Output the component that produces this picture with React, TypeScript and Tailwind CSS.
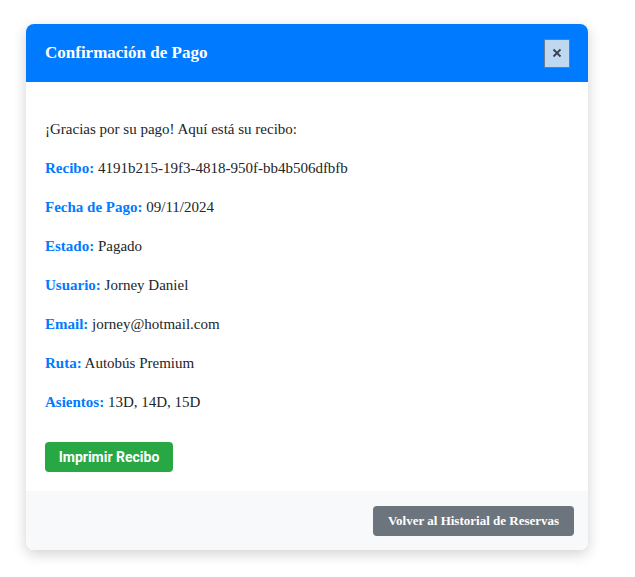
import React from 'react';

const fields = [
  { label: 'Recibo:', value: '4191b215-19f3-4818-950f-bb4b506dfbfb' },
  { label: 'Fecha de Pago:', value: '09/11/2024' },
  { label: 'Estado:', value: 'Pagado' },
  { label: 'Usuario:', value: 'Jorney Daniel' },
  { label: 'Email:', value: 'jorney@hotmail.com' },
  { label: 'Ruta:', value: 'Autobús Premium' },
  { label: 'Asientos:', value: '13D, 14D, 15D' },
];

const App = () => {
  return (
    <div className="min-h-[577px] bg-white pt-6 pl-[26px] font-['Liberation_Serif',serif]">
      <div className="w-[562px] rounded-lg bg-white shadow-[0_4px_14px_rgba(0,0,0,0.18)] overflow-hidden">
        <div className="flex h-[58px] items-center justify-between bg-[#007bff] pl-[19px] pr-[18px]">
          <h2 className="text-[17px] font-bold text-white">Confirmación de Pago</h2>
          <button className="flex h-[29px] w-[26px] items-center justify-center border border-[#6b7c90] bg-[#bfd8f2] text-[#343a40]">
            <svg width="10" height="10" viewBox="0 0 10 10">
              <path d="M1.5 1.5 L8.5 8.5 M8.5 1.5 L1.5 8.5" stroke="#3a4150" strokeWidth="1.8" />
            </svg>
          </button>
        </div>
        <div className="px-[19px] pt-[36px] pb-[19px] text-[15px] leading-[23px] text-[#212529]">
          <p className="mb-4">¡Gracias por su pago! Aquí está su recibo:</p>
          {fields.map((f) => (
            <p key={f.label} className="mb-4">
              <span className="font-bold text-[#007bff]">{f.label}</span> {f.value}
            </p>
          ))}
          <button className="mt-[12px] h-[30px] w-[128px] rounded bg-[#28a745] font-['Roboto',sans-serif] text-[14px] font-bold text-white">
            Imprimir Recibo
          </button>
        </div>
        <div className="flex h-[59px] items-center justify-end bg-[#f8f9fa] pr-[14px]">
          <button className="h-[30px] w-[201px] rounded bg-[#6c757d] text-[13px] font-bold text-white">
            Volver al Historial de Reservas
          </button>
        </div>
      </div>
    </div>
  );
};

export default App;
